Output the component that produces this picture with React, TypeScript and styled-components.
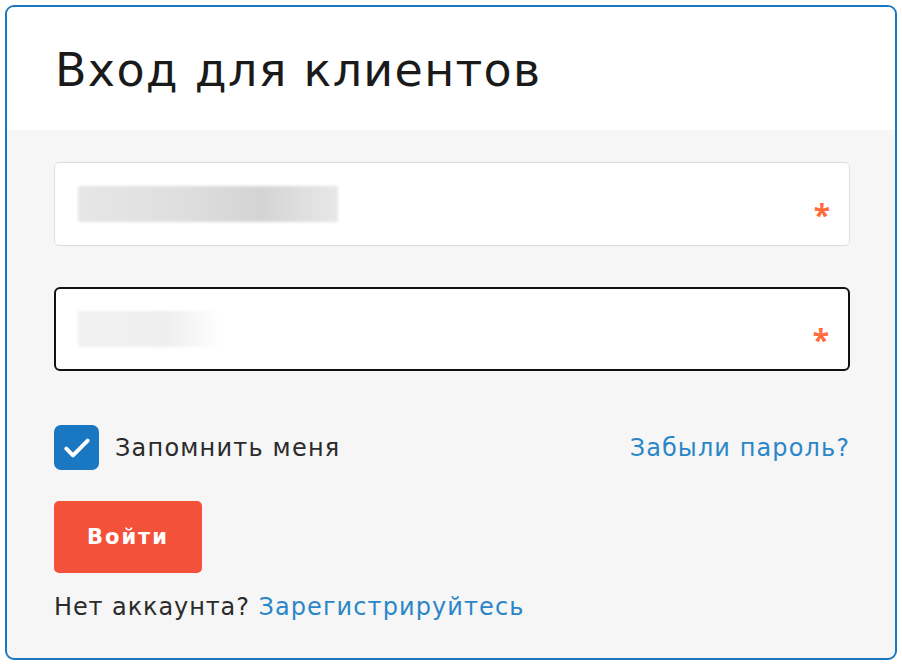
import styled, { createGlobalStyle } from 'styled-components';

const GlobalStyle = createGlobalStyle`
    html, body {
        margin: 0;
        padding: 0;
        background: #ffffff;
        font-family: "DejaVu Sans", "Noto Sans", sans-serif;
    }
`

const Card = styled.div`
    box-sizing: border-box;
    margin: 5px 0 0 5px;
    width: 892px;
    height: 655px;
    border: 2.5px solid #1a78c2;
    border-radius: 9px;
    overflow: hidden;
    background: #f6f6f6;
    display: flex;
    flex-direction: column;
`

const Header = styled.header`
    height: 123px;
    background: #ffffff;
    display: flex;
    align-items: center;
    padding: 3px 0 0 48px;
    box-sizing: border-box;
`

const Title = styled.h1`
    margin: 0;
    font-size: 46px;
    font-weight: 400;
    color: #1a1a1a;
    letter-spacing: 1.3px;
`

const Body = styled.div`
    padding: 32px 45px 0 47px;
    display: flex;
    flex-direction: column;
`

const Field = styled.div<{ $focused?: boolean }>`
    box-sizing: border-box;
    height: 84px;
    background: #ffffff;
    border: ${p => (p.$focused ? '2px solid #111' : '1.5px solid #dddddd')};
    border-radius: ${p => (p.$focused ? '6px' : '5px')};
    display: flex;
    align-items: center;
    padding: 0 19px 0 ${p => (p.$focused ? '22px' : '23px')};
    margin-bottom: 41px;
`

const Blur = styled.span<{ $w: number; $light?: boolean }>`
    display: block;
    width: ${p => p.$w}px;
    height: 36px;
    background: ${p =>
        p.$light
            ? 'linear-gradient(90deg, #f1f1f1 0%, #eeeeee 60%, #ffffff 100%)'
            : 'linear-gradient(90deg, #e6e6e6 0%, #dedede 40%, #d4d4d4 70%, #e8e8e8 100%)'};
    filter: blur(1.5px);
`

const Star = styled.span`
    margin-left: auto;
    margin-top: 22px;
    color: #ff6b3d;
    font-family: "Noto Sans", sans-serif;
    font-size: 30px;
    font-weight: 700;
    line-height: 1;
`

const Row = styled.div`
    display: flex;
    align-items: center;
    justify-content: space-between;
    margin-top: 13px;
`

const Remember = styled.label`
    display: flex;
    align-items: center;
    gap: 16px;
    font-size: 24px;
    letter-spacing: 1.2px;
    color: #2b2b2b;
`

const Box = styled.span`
    width: 45px;
    height: 45px;
    border-radius: 7px;
    background: #1a78c2;
    display: flex;
    align-items: center;
    justify-content: center;
`

const Link = styled.a`
    color: #2a86c8;
    font-size: 24px;
    letter-spacing: 1.1px;
    text-decoration: none;
`

const Button = styled.button`
    margin-top: 31px;
    width: 148px;
    height: 72px;
    border: none;
    border-radius: 5px;
    background: #f4513a;
    color: #ffffff;
    font-family: inherit;
    font-size: 21px;
    font-weight: 700;
    letter-spacing: 2px;
`

const Footer = styled.p`
    margin: 20px 0 0;
    font-size: 24px;
    letter-spacing: 0.9px;
    color: #2b2b2b;
`

export default function App() {
    return (
        <>
            <GlobalStyle />
            <Card>
                <Header>
                    <Title>Вход для клиентов</Title>
                </Header>
                <Body>
                    <Field>
                        <Blur $w={260} />
                        <Star>*</Star>
                    </Field>
                    <Field $focused>
                        <Blur $w={145} $light />
                        <Star>*</Star>
                    </Field>
                    <Row>
                        <Remember>
                            <Box>
                                <svg width="32" height="32" viewBox="0 0 24 24" fill="none" stroke="#fff" strokeWidth="3" strokeLinecap="round" strokeLinejoin="round">
                                    <path d="M4 12.5l5 5L20 6.5" />
                                </svg>
                            </Box>
                            Запомнить меня
                        </Remember>
                        <Link href="#">Забыли пароль?</Link>
                    </Row>
                    <div>
                        <Button>Войти</Button>
                    </div>
                    <Footer>
                        Нет аккаунта? <Link href="#">Зарегистрируйтесь</Link>
                    </Footer>
                </Body>
            </Card>
        </>
    );
}
